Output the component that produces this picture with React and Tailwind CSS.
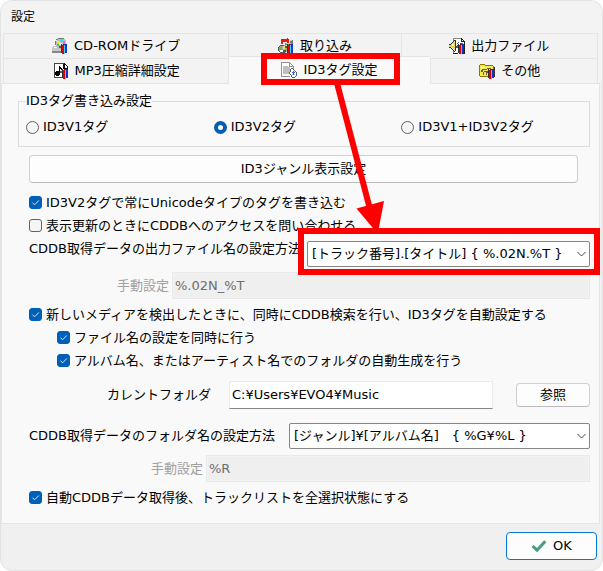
import { useState } from 'react';

// Small colored tools that sit in the corner of most tab icons
const Tools = () => (
  <>
    <path d="M7 8h3v2H7z" fill="#555" />
    <path d="M9 7h2v9H9z" fill="#fff" />
    <path d="M10 7h2v9h-2z" fill="#e00000" />
    <path d="M12 7h1v9h-1z" fill="#39d5f5" />
    <path d="M13 6h2v9h-2z" fill="#1030d0" />
    <path d="M9 6h1v9H9zM11 6h2v1h-2z" fill="#333" />
  </>
);

const Icon = ({ children }) => (
  <svg className="size-4 shrink-0" viewBox="0 0 16 16" shapeRendering="crispEdges" aria-hidden="true">
    {children}
  </svg>
);

const DriveIcon = () => (
  <Icon>
    <path d="M1 8h5l1 2h8v4H0v-3z" fill="#c8c8c8" />
    <path d="M0 13h15v2H0z" fill="#888" />
    <path d="M6 1h6l2 2v6l-2 2H6L4 9V3z" fill="#bdbdbd" />
    <path d="M6 0h6v1H6zM4 1h2v1H4zM3 3h1v4H3z" fill="#777" />
    <path d="M5 3h3v2H5z" fill="#f6f000" />
    <path d="M8 1h3v3H8z" fill="#32e4e4" />
    <path d="M11 3h2v3h-2z" fill="#ee60ee" />
    <path d="M5 6h2v2H5z" fill="#32dc50" />
    <path d="M7 5h3v2H7z" fill="#fff" />
    <path d="M2 9h3v1H2z" fill="#fff" />
    <Tools />
  </Icon>
);

const RipIcon = () => (
  <Icon>
    <path d="M2 7h5l2 2v4l-2 2H2l-2-2V9z" fill="#a8a8a8" />
    <path d="M2 7h4v1H2zM1 8h1v1H1zM0 9h1v4H0zM1 13h1v1H1zM2 14h5v1H2z" fill="#555" />
    <path d="M1 9h3v3H1z" fill="#30dc30" />
    <path d="M5 8h2v3H5z" fill="#f0f040" />
    <path d="M2 12h3v2H2z" fill="#fff" />
    <path d="M5 12h3v2H5z" fill="#555" />
    <path d="M3 1h6V0h1v1h1v4h-1v1H9V4H5v2H3z" fill="#f01808" />
    <path d="M7 5h8v2H7zM12 2h3v3h-3z" fill="#777" />
    <path d="M12 2h2v1h-2zM8 5h5v1H8z" fill="#c8c8c8" />
    <Tools />
  </Icon>
);

const OutputIcon = () => (
  <Icon>
    <path d="M4 0h9l2 2v13H4z" fill="#fff" />
    <path d="M4 0h9v1H4zM4 0h1v3H4zM4 12h1v3H4z" fill="#888" />
    <path d="M12 0h1v3h3v1h-4zM13 1h1v1h-1zM14 2h1v1h-1zM15 3h1v13h-1zM4 15h12v1H4z" fill="#222" />
    <path d="M0 6h2l4-4v11l-4-4H0z" fill="#e0d850" />
    <path d="M0 6h2v1H0zM2 5h1v1H2zM3 4h1v1H3zM4 3h1v1H4zM5 2h1v1H5zM6 2h1v11H6zM0 9h2v1H0zM2 10h1v1H2zM3 11h1v1H3zM4 12h1v1H4zM5 13h1v1H5z" fill="#333" />
    <path d="M3 6h2v2H3z" fill="#fffcc0" />
    <path d="M8 5h1v1H8zM9 4h1v1H9zM8 7h2v1H8zM11 5h3v1h-3z" fill="#555" />
    <Tools />
  </Icon>
);

const MusicIcon = () => (
  <Icon>
    <path d="M1 0h10l4 4v11H1z" fill="#fff" />
    <path d="M1 0h10v1H1zM1 0h1v15H1zM1 14h9v1H1z" fill="#444" />
    <path d="M11 0h1v1h-1zM12 1h1v1h-1zM13 2h1v1h-1zM14 3h1v4h-1zM11 1h1v4h3v1h-5V1z" fill="#111" />
    <path d="M6 3h1v7H6zM7 4h1v2H7zM8 5h1v2H8zM3 8h3v1H3zM2 9h5v3H2zM3 12h3v1H3z" fill="#000" />
    <Tools />
  </Icon>
);

const TagIcon = () => (
  <Icon>
    <path d="M1 0h8l4 4v11H1z" fill="#fff" />
    <path d="M1 0h8v1H1zM0 0h1v15H0zM0 14h9v1H0zM9 1h1v1H9zM10 2h1v1h-1zM11 3h1v1h-1zM12 4h1v3h-1zM8 1h1v3h3v1H8z" fill="#909090" />
    <path d="M2 4h5v1H2zM2 5h7v7H2z" fill="#bebebe" />
    <path d="M10 7h3v1h2v2h1v3h-1v1h-1v1h-3v-1h-1v-2H8v-2h1V9h1z" fill="#fff" />
    <path d="M10 6h2v1h-2zM9 7h1v3H9zM8 10h1v2H8zM9 12h1v1H9zM10 13h1v2h-1zM11 15h3v1h-3zM14 14h1v1h-1zM15 10h1v4h-1zM14 9h1v1h-1zM13 8h1v1h-1zM12 7h1v1h-1z" fill="#606060" />
    <path d="M12 9h1v4h-1zM11 10h3v1h-3z" fill="#4858d8" />
    <path d="M11 12h1v1h-1zM13 12h1v1h-1z" fill="#8fc0ff" />
  </Icon>
);

const FolderIcon = () => (
  <Icon>
    <path d="M1 2h5l1 1h7v10H1z" fill="#f2e95c" />
    <path d="M1 1h5v1H1zM0 2h1v11H0zM6 2h1v1H6zM7 2h7v1H7zM14 3h1v10h-1zM1 13h8v1H1z" fill="#8a7a00" />
    <path d="M15 4h1v10h-1z" fill="#333" />
    <path d="M3 6h5v1H3zM2 7h2v2H2zM5 8h3v1H5zM4 9h1v3H4zM7 10h1v2H7zM8 5h4v1H8z" fill="#6a6420" />
    <path d="M2 4h4v1H2z" fill="#fffbd0" />
    <Tools />
  </Icon>
);

const Tab = ({ icon, children, selected, className = '' }) => (
  <button
    type="button"
    role="tab"
    aria-selected={!!selected}
    className={`flex items-center justify-center gap-1.5 border-[#e5e5e5] ${
      selected ? 'relative -mb-px -mt-0.5 border-t bg-[#f9f9f9] pb-0.5' : 'border-r border-t bg-[#f3f3f3]'
    } ${className}`}
  >
    {icon}
    <span>{children}</span>
  </button>
);

const Check = ({ children, defaultChecked = true, className = '' }) => (
  <label className={`flex h-[23px] items-center gap-1 whitespace-nowrap ${className}`}>
    <span className="relative flex size-[13px] shrink-0">
      <input
        type="checkbox"
        defaultChecked={defaultChecked}
        className="peer size-[13px] appearance-none rounded-[3px] border border-[#626262] bg-[#f5f5f5] checked:border-[#005fb8] checked:bg-[#005fb8]"
      />
      <svg className="pointer-events-none absolute inset-0 hidden size-[13px] peer-checked:block" viewBox="0 0 13 13" aria-hidden="true">
        <path d="M3.5 6.7l2.1 2.1 4.2-4.3" fill="none" stroke="#dcecfa" strokeWidth="1" />
      </svg>
    </span>
    {children}
  </label>
);

const Radio = ({ children, value, current, onChange }) => (
  <label className="flex h-5 items-center gap-1 whitespace-nowrap">
    <input
      type="radio"
      name="id3-version"
      checked={current === value}
      onChange={() => onChange(value)}
      className="size-[13px] shrink-0 appearance-none rounded-full border border-[#626262] bg-[#f5f5f5] checked:border-4 checked:border-[#005fb8] checked:bg-white"
    />
    {children}
  </label>
);

const Combo = ({ id, option }) => (
  <div className="relative min-w-0 flex-1">
    <select id={id} className="block h-[26px] w-full appearance-none rounded-[2px] border border-[#868686] bg-white pl-1 pr-5">
      <option>{option}</option>
    </select>
    <svg className="pointer-events-none absolute right-1 top-[9px] h-2 w-[9px]" viewBox="0 0 9 8" aria-hidden="true">
      <path d="M0.5 2l4 4 4-4" fill="none" stroke="#444" />
    </svg>
  </div>
);

const ManualInput = ({ id, value }) => (
  <input
    id={id}
    disabled
    defaultValue={value}
    className="h-[27px] min-w-0 flex-1 border-2 border-[#f3f3f3] bg-[#efefef] px-px text-[#6d6d6d] outline outline-1 -outline-offset-1 outline-[#e9e9e9]"
  />
);

// Red call-outs drawn over the dialog
const Callouts = () => (
  <svg className="pointer-events-none absolute -left-px -top-px" width="603" height="571" viewBox="0 0 603 571" aria-hidden="true">
    <g fill="none" stroke="#ff0000" strokeWidth="6">
      <path d="M264 56h133v26H264z" />
      <path d="M301 231h296v41H301z" />
      <path d="M337 83l34 130" />
    </g>
    <path d="M356.500 208.500L384 201l-5.500 29h-4z" fill="#ff0000" />
  </svg>
);

const App = () => {
  const [version, setVersion] = useState('v2');

  return (
    <div className="min-h-screen bg-white">
      <main className="relative flex min-h-screen flex-col rounded-xl border border-[#e3e3e3] bg-[#f0f0f0] font-['DejaVu_Sans','Noto_Sans_CJK_JP',sans-serif] text-[13px] leading-4 text-black">
        <header className="flex h-8 items-center rounded-t-xl bg-[#f3f3f3] px-2.5">
          <h1 className="text-[12px]">設定</h1>
        </header>

        {/* Tabs */}
        <div role="tablist" className="relative bg-[#f3f3f3] pl-0.5 pr-1">
          <div className="grid h-[25px] grid-cols-[226fr_172fr_196fr]">
            <Tab icon={<DriveIcon />} className="border-l">CD-ROMドライブ</Tab>
            <Tab icon={<RipIcon />}>取り込み</Tab>
            <Tab icon={<OutputIcon />}>出力ファイル</Tab>
          </div>
          <div className="grid h-[25px] grid-cols-[226fr_200fr_168fr]">
            <Tab icon={<MusicIcon />} className="border-l">MP3圧縮詳細設定</Tab>
            <Tab icon={<TagIcon />} selected>ID3タグ設定</Tab>
            <Tab icon={<FolderIcon />} className="border-l pr-2">その他</Tab>
          </div>
        </div>

        <section role="tabpanel" className="mr-0.5 border border-[#e5e5e5] bg-[#f9f9f9] pb-3.5 pl-4 pr-[9px] pt-[9px]">
          <fieldset className="border border-[#dcdcdc] pb-[9px] pl-[7px]">
            <legend className="h-4">ID3タグ書き込み設定</legend>
            <div className="grid grid-cols-3 pt-2">
              <Radio value="v1" current={version} onChange={setVersion}>ID3V1タグ</Radio>
              <Radio value="v2" current={version} onChange={setVersion}>ID3V2タグ</Radio>
              <Radio value="both" current={version} onChange={setVersion}>ID3V1+ID3V2タグ</Radio>
            </div>
          </fieldset>

          <div className="pl-[11px]">
            <div className="pr-3">
              <button type="button" className="mt-2 h-7 w-full rounded border border-[#d0d0d0] border-b-[#bcbcbc] bg-[#fdfdfd]">
                ID3ジャンル表示設定
              </button>
            </div>

            <Check className="mt-2">ID3V2タグで常にUnicodeタイプのタグを書き込む</Check>
            <Check defaultChecked={false}>表示更新のときにCDDBへのアクセスを問い合わせる</Check>

            <div className="mt-1 flex items-start">
              <label htmlFor="file-format" className="w-[278px] shrink-0 whitespace-nowrap">
                CDDB取得データの出力ファイル名の設定方法
              </label>
              <Combo id="file-format" option="[トラック番号].[タイトル] { %.02N.%T }" />
            </div>
            <div className="mt-[5px] flex items-center">
              <label htmlFor="file-manual" className="w-[143px] shrink-0 pr-[3px] text-right text-[#a0a0a0]">手動設定</label>
              <ManualInput id="file-manual" value="%.02N_%T" />
            </div>

            <Check className="mt-1">新しいメディアを検出したときに、同時にCDDB検索を行い、ID3タグを自動設定する</Check>
            <Check className="pl-7">ファイル名の設定を同時に行う</Check>
            <Check className="pl-7">アルバム名、またはアーティスト名でのフォルダの自動生成を行う</Check>

            <div className="mt-[9px] flex items-center">
              <label htmlFor="folder" className="w-[200px] shrink-0 pr-[18px] text-right">カレントフォルダ</label>
              <input
                id="folder"
                defaultValue="C:¥Users¥EVO4¥Music"
                className="h-7 min-w-0 flex-1 border border-[#e9e9e9] border-b-[#868686] bg-white px-0.5 pb-0.5"
              />
              <button type="button" className="ml-[23px] h-6 w-[74px] rounded border border-[#d0d0d0] border-b-[#bcbcbc] bg-[#fdfdfd]">
                参照
              </button>
            </div>

            <div className="mt-3.5 flex items-center">
              <label htmlFor="folder-format" className="w-[260px] shrink-0 whitespace-nowrap">
                CDDB取得データのフォルダ名の設定方法
              </label>
              <Combo id="folder-format" option="[ジャンル]¥[アルバム名]　{ %G¥%L }" />
            </div>
            <div className="mt-1.5 flex items-center">
              <label htmlFor="folder-manual" className="w-[177px] shrink-0 pr-[3px] text-right text-[#a0a0a0]">手動設定</label>
              <ManualInput id="folder-manual" value="%R" />
            </div>

            <Check className="mt-1">自動CDDBデータ取得後、トラックリストを全選択状態にする</Check>
          </div>
        </section>

        <footer className="flex justify-end pr-[5px] pt-2">
          <button type="button" className="flex h-7 w-[91px] items-center justify-center gap-1.5 rounded border border-[#0078d4] bg-[#fdfdfd]">
            <svg className="h-3 w-4" viewBox="0 0 16 12" aria-hidden="true">
              <path d="M1.500 6l4.500 4.200L14.300 1.200" fill="none" stroke="#4a9c80" strokeWidth="3" />
            </svg>
            OK
          </button>
        </footer>

        <Callouts />
      </main>
    </div>
  );
};

export default App;
